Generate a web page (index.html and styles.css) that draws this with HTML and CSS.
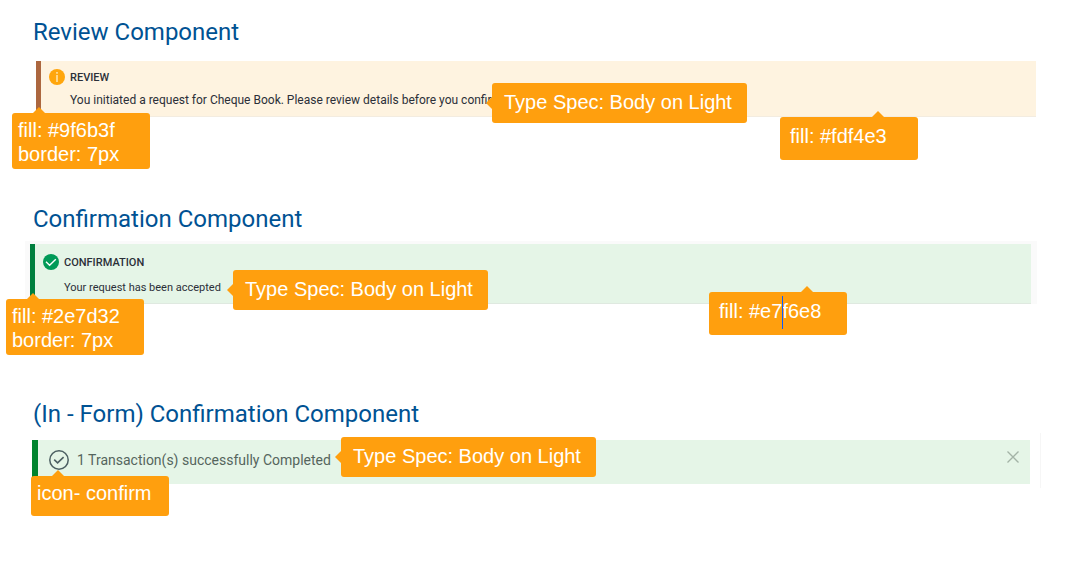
FILE: index.html
```html
<!DOCTYPE html>
<html lang="en">
<head>
    <meta charset="UTF-8">
    <meta name="viewport" content="width=device-width, initial-scale=1.0">
    <title>Message Components</title>
    <link rel="stylesheet" href="styles.css">
</head>
<body>
    <main>
        <section class="component review">
            <h2>Review Component</h2>
            <div class="alert">
                <svg class="icon" viewBox="0 0 16 16" aria-hidden="true">
                    <circle cx="8" cy="8" r="8" fill="#ffa60d"/>
                    <path d="M8 6v7M8 3v1.7" stroke="#ffe3a8" stroke-width="1.6"/>
                </svg>
                <div class="alert-body">
                    <h3>REVIEW</h3>
                    <p>You initiated a request for Cheque Book. Please review details before you confirm</p>
                </div>
                <div class="callout callout-border">fill: #9f6b3f<br>border: 7px</div>
                <div class="callout callout-type">Type Spec: Body on Light</div>
                <div class="callout callout-fill">fill: #fdf4e3</div>
            </div>
        </section>

        <section class="component confirmation">
            <h2>Confirmation Component</h2>
            <div class="alert-frame">
                <div class="alert">
                    <svg class="icon" viewBox="0 0 16 16" aria-hidden="true">
                        <circle cx="8" cy="8" r="8" fill="#009a57"/>
                        <path d="M3 7.8l3.6 3.4 6.2-6" fill="none" stroke="#fff" stroke-width="1.4"/>
                    </svg>
                    <div class="alert-body">
                        <h3>CONFIRMATION</h3>
                        <p>Your request has been accepted</p>
                    </div>
                    <div class="callout callout-border">fill: #2e7d32<br>border: 7px</div>
                    <div class="callout callout-type">Type Spec: Body on Light</div>
                    <div class="callout callout-fill">fill: #e7<span class="caret"></span>f6e8</div>
                </div>
            </div>
        </section>

        <section class="component in-form">
            <h2>(In - Form) Confirmation Component</h2>
            <div class="alert">
                <svg class="icon" viewBox="0 0 20 20" aria-hidden="true">
                    <circle cx="10" cy="10" r="9.2" fill="none" stroke="#4c5f62" stroke-width="1.5"/>
                    <path d="M5.2 9.6l3.4 3.3 6-5.8" fill="none" stroke="#4c5f62" stroke-width="1.6"/>
                </svg>
                <p>1 Transaction(s) successfully Completed</p>
                <button class="close" type="button" aria-label="Close">
                    <svg viewBox="0 0 12 12" aria-hidden="true">
                        <path d="M.5.5l11 11M11.5.5l-11 11" stroke="#a3b3a6" stroke-width="1.3"/>
                    </svg>
                </button>
                <div class="callout callout-icon">icon- confirm</div>
                <div class="callout callout-type">Type Spec: Body on Light</div>
            </div>
        </section>
    </main>
</body>
</html>
```

FILE: styles.css
```css
* {
    margin: 0;
    padding: 0;
    box-sizing: border-box;
}

body {
    font-family: Roboto, sans-serif;
    background: #fff;
    color: #2b2f38;
}

main {
    padding: 16px 0 48px;
}

h2 {
    margin-left: 33px;
    font-size: 24px;
    line-height: 32px;
    font-weight: 400;
    color: #005293;
}

.alert {
    position: relative;
    display: flex;
    border-left: 5px solid #007f3e;
    background: #e5f5e7;
}

.icon {
    flex: none;
    width: 16px;
    height: 16px;
}

.alert-body {
    margin-left: 5px;
}

.alert h3 {
    font-size: 11px;
    line-height: 18px;
    font-weight: 500;
}

.alert p {
    font-size: 12px;
    line-height: 16px;
}

/* Review */
.review .alert {
    margin: 13px 32px 0 36px;
    padding: 8px;
    border-left-color: #ac673f;
    border-bottom: 1px solid #f3ece0;
    background: #fef3e0;
}

.review .alert p {
    margin-top: 5px;
}

/* Confirmation */
.confirmation {
    margin-top: 86px;
}

.alert-frame {
    margin: 6px 31px 0 25px;
    padding: 3px 6px 0 5px;
    background: #fafafa;
}

.confirmation .alert {
    padding: 10px 8px 7px;
    border-bottom: 1px solid #dfe9e0;
}

.confirmation .alert p {
    margin-top: 8px;
    font-size: 11px;
}

/* In form */
.in-form {
    margin-top: 94px;
}

.in-form .alert {
    align-items: center;
    margin: 10px 38px 0 32px;
    padding: 8px 11px 12px;
    border-left-width: 6px;
    border-left-color: #00832d;
}

.in-form .alert::after {
    content: "";
    position: absolute;
    top: -7px;
    right: -11px;
    bottom: -4px;
    width: 1px;
    background: #f6f6f6;
}

.in-form .icon {
    width: 20px;
    height: 20px;
}

.in-form .alert p {
    margin-left: 8px;
    font-size: 14px;
    line-height: 24px;
    color: #55655d;
}

.close {
    display: flex;
    margin-left: auto;
    padding-bottom: 6px;
    border: none;
    background: none;
    cursor: pointer;
}

.close svg {
    width: 12px;
    height: 12px;
}

/* Spec callouts */
.callout {
    position: absolute;
    width: 138px;
    padding: 5px 6px 3px;
    border-radius: 3px;
    background: #ff9f0e;
    color: #fff;
    font-family: "Liberation Sans", Arial, sans-serif;
    font-size: 20px;
    line-height: 24px;
    white-space: nowrap;
}

.callout::before {
    content: "";
    position: absolute;
    top: -6px;
    border: 6px solid transparent;
    border-top: none;
    border-bottom-color: #ff9f0e;
}

.callout-border {
    top: 52px;
    left: -29px;
}

.callout-border::before {
    left: 21px;
}

.callout-type {
    top: 22px;
    left: 451px;
    width: 255px;
    padding: 7px 12px 9px;
}

.callout-type::before {
    top: 14px;
    left: -6px;
    border: 6px solid transparent;
    border-left: none;
    border-right-color: #ff9f0e;
}

.callout-fill {
    top: 56px;
    right: 118px;
    padding: 7px 10px 12px;
}

.callout-fill::before {
    left: 92px;
}

.confirmation .callout-border {
    top: 55px;
}

.confirmation .callout-type {
    top: 26px;
    left: 198px;
}

.confirmation .callout-fill {
    top: 48px;
    right: 184px;
}

.in-form .callout-type {
    top: -3px;
    left: 303px;
}

.callout-icon {
    top: 36px;
    left: -7px;
    padding: 5px 6px 11px;
}

.callout-icon::before {
    left: 21px;
}

.caret {
    position: absolute;
    top: 4px;
    width: 1px;
    height: 33px;
    background: #0a5cff;
}
```
